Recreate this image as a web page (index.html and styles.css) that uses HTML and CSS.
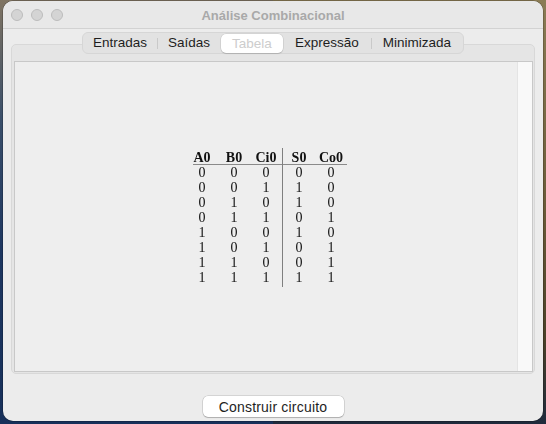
FILE: index.html
```html
<!DOCTYPE html>
<html lang="pt">
<head>
<meta charset="utf-8">
<title>Análise Combinacional</title>
<link rel="stylesheet" href="styles.css">
</head>
<body>
<div class="window">
  <div class="titlebar">
    <div class="lights"><span class="light"></span><span class="light"></span><span class="light"></span></div>
    <div class="title">Análise Combinacional</div>
    <div></div>
  </div>
  <div class="content">
    <div class="tabs-row">
      <div class="tabs">
        <div class="tab t1">Entradas</div>
        <div class="tab t2 sep">Saídas</div>
        <div class="tab t3 selected">Tabela</div>
        <div class="tab t4">Expressão</div>
        <div class="tab t5 sep">Minimizada</div>
      </div>
    </div>
    <div class="pane">
      <div class="view">
        <div class="viewport">
          <div class="truth">
            <div class="group">
              <div class="hd">A0</div><div class="hd">B0</div><div class="hd">Ci0</div>
              <div class="rule first"></div>
              <div>0</div><div>0</div><div>0</div>
              <div>0</div><div>0</div><div>1</div>
              <div>0</div><div>1</div><div>0</div>
              <div>0</div><div>1</div><div>1</div>
              <div>1</div><div>0</div><div>0</div>
              <div>1</div><div>0</div><div>1</div>
              <div>1</div><div>1</div><div>0</div>
              <div>1</div><div>1</div><div>1</div>
            </div>
            <div class="group outputs">
              <div class="hd">S0</div><div class="hd">Co0</div>
              <div class="rule"></div>
              <div>0</div><div>0</div>
              <div>1</div><div>0</div>
              <div>1</div><div>0</div>
              <div>0</div><div>1</div>
              <div>1</div><div>0</div>
              <div>0</div><div>1</div>
              <div>0</div><div>1</div>
              <div>1</div><div>1</div>
            </div>
          </div>
        </div>
        <div class="scrollbar"></div>
      </div>
    </div>
    <div class="footer">
      <button class="btn">Construir circuito</button>
    </div>
  </div>
</div>
</body>
</html>
```
FILE: styles.css
```css
html, body {
  margin: 0;
  padding: 0;
}
body {
  width: 546px;
  height: 424px;
  overflow: hidden;
  background:
    linear-gradient(#807462, #3a4f6a 28%, #1d3660 60%, #17305a) left top / 50% 100% no-repeat,
    linear-gradient(#8b7c55, #6a5a38 50%, #4a4028 80%, #1f2a3c) right top / 50% 100% no-repeat;
  font-family: "Liberation Sans", Arial, sans-serif;
}
.window {
  margin: 1px 0 0 3px;
  width: 540px;
  height: 420px;
  border-radius: 10px;
  overflow: hidden;
  background: #ececec;
  display: flex;
  flex-direction: column;
  box-shadow: 0 0 0 0.5px rgba(0,0,0,0.35);
}
.titlebar {
  height: 27px;
  border-bottom: 1px solid #d2d2d2;
  background: #e8e8e8;
  display: grid;
  grid-template-columns: 1fr auto 1fr;
  align-items: center;
}
.lights {
  display: flex;
  gap: 8px;
  padding-left: 8px;
  padding-top: 1px;
}
.light {
  width: 10px;
  height: 10px;
  border-radius: 50%;
  background: #d4d4d4;
  border: 1px solid #bcbcbc;
}
.title {
  font-weight: bold;
  font-size: 13px;
  color: #a9a9a9;
  padding-top: 1px;
}
.content {
  padding: 3px 8px 0 8px;
  display: flex;
  flex-direction: column;
}
.tabs-row {
  display: flex;
  justify-content: center;
  margin-bottom: -10px;
  position: relative;
  z-index: 1;
}
.tabs {
  display: flex;
  height: 20px;
  border: 1px solid #d6d6d6;
  border-radius: 6px;
  background: #e2e2e2;
  align-items: center;
}
.tab {
  font-size: 13.5px;
  color: #1e1e1e;
  height: 20px;
  line-height: 20px;
  text-align: center;
  position: relative;
}
.t1 { width: 74px; }
.t2 { width: 64px; }
.t3 { width: 62px; }
.t4 { width: 88px; }
.t5 { width: 92px; }
.tab.sep::before {
  content: "";
  position: absolute;
  left: 0;
  top: 5px;
  height: 11px;
  width: 1px;
  background: #c9c9c9;
}
.tab.selected {
  background: #ffffff;
  color: #cdcdcd;
  border-radius: 5px;
  height: 19px;
  line-height: 19px;
  box-shadow: 0 0 0 0.5px rgba(0,0,0,0.12), 0 1px 1px rgba(0,0,0,0.12);
}
.pane {
  border: 1px solid #d8d8d8;
  border-radius: 5px;
  background: #e5e5e5;
  padding: 16px 1px 1px 2px;
}
.view {
  height: 309px;
  border: 1px solid #c8c8c8;
  background: #eeeeee;
  display: flex;
}
.viewport {
  flex: 1;
  display: flex;
  align-items: center;
  justify-content: center;
}
.scrollbar {
  width: 14px;
  background: #f9f9f9;
  border-left: 1px solid #e4e4e4;
}
.truth {
  display: flex;
  font-family: "Liberation Serif", "Times New Roman", serif;
  font-size: 14px;
  color: #111;
  margin-left: 1px;
  margin-top: 1px;
  will-change: transform;
}
.group {
  display: grid;
  grid-template-columns: repeat(3, 32px);
  grid-template-rows: 15px 0px;
  grid-auto-rows: 15px;
  line-height: 15px;
  text-align: center;
  padding: 2px 0 2px 0;
}
.group.outputs {
  grid-template-columns: repeat(2, 32px);
  border-left: 1px solid #7f7f7f;
}
.hd {
  font-weight: bold;
}
.rule {
  grid-column: 1 / -1;
  grid-row: 2;
  height: 1px;
  background: #8a8a8a;
  align-self: start;
  margin-top: -1px;
}
.rule.first {
  margin-left: 7px;
}
.footer {
  display: flex;
  justify-content: center;
  padding-top: 22px;
}
.btn {
  width: 141px;
  height: 21px;
  padding: 0;
  border: none;
  border-radius: 5px;
  background: #ffffff;
  font-family: "Liberation Sans", Arial, sans-serif;
  font-size: 14px;
  letter-spacing: 0.2px;
  color: #1e1e1e;
  box-shadow: 0 0 0 0.5px rgba(0,0,0,0.2), 0 1px 1px rgba(0,0,0,0.18);
}
```
